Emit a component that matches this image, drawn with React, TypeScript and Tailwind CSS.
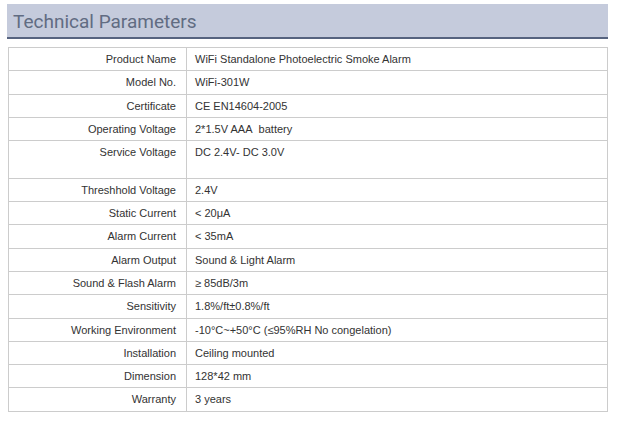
import React from "react";

const rows: [string, React.ReactNode][] = [
  ["Product Name", "WiFi Standalone Photoelectric Smoke Alarm"],
  ["Model No.", "WiFi-301W"],
  ["Certificate", "CE EN14604-2005"],
  ["Operating Voltage", "2*1.5V AAA\u00a0 battery"],
  [
    "Service Voltage",
    <>
      DC 2.4V- DC 3.0V
      <br />
      {"\u00a0"}
    </>,
  ],
  ["Threshhold Voltage", "2.4V"],
  ["Static Current", "< 20\u03bcA"],
  ["Alarm Current", "< 35mA"],
  ["Alarm Output", "Sound & Light Alarm"],
  ["Sound & Flash Alarm", "\u2265 85dB/3m"],
  ["Sensitivity", "1.8%/ft\u00b10.8%/ft"],
  ["Working Environment", "-10\u00b0C~+50\u00b0C (\u226495%RH No congelation)"],
  ["Installation", "Ceiling mounted"],
  ["Dimension", "128*42 mm"],
  ["Warranty", "3 years"],
];

export default function App() {
  return (
    <div className="w-[618px] h-[431px] bg-white pt-[4px]">
      <div className="ml-[7px] w-[601px] h-[35px] bg-[#c5cbdc] border-b-2 border-[#56637f] pl-[6px] flex items-center">
        <h2 className="text-[19px] leading-none text-[#616c82] font-['Roboto',sans-serif] pt-[1px]">
          Technical Parameters
        </h2>
      </div>
      <table className="ml-[8px] mt-[8px] w-[600px] border-collapse font-['Liberation_Sans',Arial,sans-serif] text-[11px] leading-[14.3px] text-[#333]">
        <tbody>
          {rows.map(([k, v], i) => (
            <tr key={i}>
              <td className="w-[178px] border border-[#cccccc] text-right align-top py-[4px] pr-[10px]">
                {k}
              </td>
              <td className="border border-[#cccccc] text-left align-top py-[4px] pl-[8px]">
                {v}
              </td>
            </tr>
          ))}
        </tbody>
      </table>
    </div>
  );
}
